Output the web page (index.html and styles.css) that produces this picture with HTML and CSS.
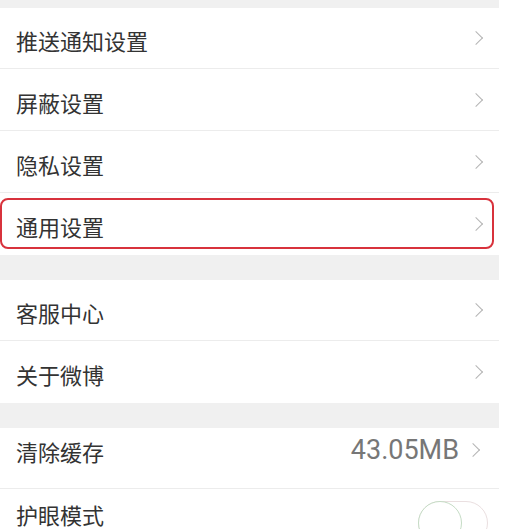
FILE: index.html
```html
<!DOCTYPE html>
<html>
  <head>
    <title>设置</title>
    <link rel="stylesheet" href="styles.css">
  </head>
  <body>
    <div class="settings">
      <div class="group">
        <div class="row"><span class="label">推送通知设置</span><span class="arrow"></span></div>
        <div class="row"><span class="label">屏蔽设置</span><span class="arrow"></span></div>
        <div class="row"><span class="label">隐私设置</span><span class="arrow"></span></div>
        <div class="row marked"><span class="label">通用设置</span><span class="arrow"></span></div>
      </div>
      <div class="group">
        <div class="row"><span class="label">客服中心</span><span class="arrow"></span></div>
        <div class="row"><span class="label">关于微博</span><span class="arrow"></span></div>
      </div>
      <div class="group">
        <div class="row cache"><span class="label">清除缓存</span><span class="value">43.05MB</span><span class="arrow small"></span></div>
        <div class="row eye"><span class="label">护眼模式</span><span class="switch"><span class="knob"></span></span></div>
      </div>
    </div>
  </body>
</html>
```

FILE: styles.css
```css
body {
  margin: 0;
  background-color: #ffffff;
  font-family: "Noto Sans CJK SC", "Noto Sans", sans-serif;
  color: #333333;
}
.settings {
  width: 499px;
  background-color: #f0f0f0;
  padding-top: 8px;
  display: flex;
  flex-direction: column;
  gap: 25px;
}
.group {
  background-color: #ffffff;
}
.row {
  position: relative;
  height: 61px;
  display: flex;
  align-items: center;
  padding: 4px 14px 0 16px;
  box-sizing: border-box;
  border-bottom: 1px solid #ececec;
}
.group .row:last-child {
  border-bottom: none;
}
.row + .row {
  height: 62px;
}
.row.cache {
  padding-top: 0;
  padding-bottom: 14px;
}
.row.eye {
  padding-top: 0;
  padding-bottom: 12px;
}
.label {
  flex: 1;
  font-size: 22px;
  line-height: 1;
}
.value {
  font-family: Roboto, "Liberation Sans", sans-serif;
  font-size: 27px;
  color: #777777;
  margin-right: 9px;
  margin-top: -2px;
}
.arrow {
  width: 9px;
  height: 9px;
  border-top: 1.5px solid #b4b4b4;
  border-right: 1.5px solid #b4b4b4;
  transform: rotate(45deg);
  margin-right: 4px;
  margin-top: -4px;
}
.arrow.small {
  margin-right: 7px;
  margin-top: -2px;
}
.marked::after {
  content: "";
  position: absolute;
  left: 0;
  top: 5px;
  width: 494px;
  height: 51px;
  box-sizing: border-box;
  border: 2px solid #d8323c;
  border-radius: 8px;
}
.switch {
  position: relative;
  width: 70px;
  height: 44px;
  box-sizing: border-box;
  border: 1px solid #eadfe0;
  border-radius: 22px;
  margin-right: -3px;
  margin-top: 18px;
}
.knob {
  position: absolute;
  left: -1px;
  top: -1px;
  width: 44px;
  height: 44px;
  box-sizing: border-box;
  border: 1.5px solid #c5dcc5;
  border-radius: 50%;
  background-color: #ffffff;
}
```
